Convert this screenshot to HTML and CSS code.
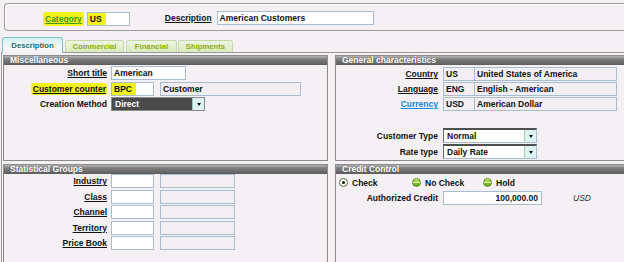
FILE: index.html
```html
<!DOCTYPE html>
<html>
<head>
<meta charset="utf-8">
<title>Customer</title>
<link rel="stylesheet" href="styles.css">
</head>
<body>
<div class="screen">
  <div class="header-frame">
    <span class="hl cat-label">Category</span>
    <span class="field cat-field"><span class="hl-in">US</span></span>
    <span class="lbl u desc-label">Description</span>
    <span class="field desc-field">American Customers</span>
  </div>

  <div class="tabs">
    <div class="tab active">Description</div>
    <div class="tab t-commercial">Commercial</div>
    <div class="tab t-financial">Financial</div>
    <div class="tab t-shipments">Shipments</div>
  </div>

  <div class="tabpanel">
    <section class="box">
      <div class="box-title">Miscellaneous</div>
      <div class="form misc-form">
        <span class="lbl"><span class="u">Short title</span></span>
        <div class="ctl"><span class="field w75">American</span></div>

        <span class="lbl"><span class="hl hl-cc u">Customer counter</span></span>
        <div class="ctl"><span class="field w43"><span class="hl-in">BPC</span></span><span class="field ro w141 sp6">Customer</span></div>

        <span class="lbl">Creation Method</span>
        <div class="ctl"><span class="select dark w94"><span class="sel-text">Direct</span><span class="arrow"></span></span></div>
      </div>
    </section>

    <section class="box box-right">
      <div class="box-title">General characteristics</div>
      <div class="form gen-form">
        <span class="lbl"><span class="u">Country</span></span>
        <div class="ctl"><span class="field ro w31">US</span><span class="field ro w142 join">United States of America</span></div>

        <span class="lbl"><span class="u">Language</span></span>
        <div class="ctl"><span class="field ro w31">ENG</span><span class="field ro w142 join">English - American</span></div>

        <span class="lbl"><span class="u link">Currency</span></span>
        <div class="ctl"><span class="field ro w31">USD</span><span class="field ro w142 join">American Dollar</span></div>

        <div class="spacer"></div>

        <span class="lbl">Customer Type</span>
        <div class="ctl"><span class="select w94"><span class="sel-text">Normal</span><span class="arrow"></span></span></div>

        <span class="lbl">Rate type</span>
        <div class="ctl"><span class="select w94"><span class="sel-text">Daily Rate</span><span class="arrow"></span></span></div>
      </div>
    </section>

    <section class="box box-bottom">
      <div class="box-title">Statistical Groups</div>
      <div class="form stat-form">
        <span class="lbl"><span class="u">Industry</span></span>
        <div class="ctl"><span class="field w43"></span><span class="field ro w75 sp6"></span></div>
        <span class="lbl"><span class="u">Class</span></span>
        <div class="ctl"><span class="field w43"></span><span class="field ro w75 sp6"></span></div>
        <span class="lbl"><span class="u">Channel</span></span>
        <div class="ctl"><span class="field w43"></span><span class="field ro w75 sp6"></span></div>
        <span class="lbl"><span class="u">Territory</span></span>
        <div class="ctl"><span class="field w43"></span><span class="field ro w75 sp6"></span></div>
        <span class="lbl"><span class="u">Price Book</span></span>
        <div class="ctl"><span class="field w43"></span><span class="field ro w75 sp6"></span></div>
      </div>
    </section>

    <section class="box box-right box-bottom">
      <div class="box-title">Credit Control</div>
      <div class="radios">
        <label class="radio r-check"><span class="dot checked"></span>Check</label>
        <label class="radio r-nocheck"><span class="dot green"></span>No Check</label>
        <label class="radio r-hold"><span class="dot green"></span>Hold</label>
      </div>
      <div class="form credit-form">
        <span class="lbl">Authorized Credit</span>
        <div class="ctl"><span class="field w99 num">100,000.00</span><span class="cur">USD</span></div>
      </div>
    </section>
  </div>
</div>
</body>
</html>
```

FILE: styles.css
```css
html, body {
  margin: 0;
  padding: 0;
  overflow: hidden;
}

body {
  width: 624px;
  height: 262px;
  background: #f4f0f4;
  font-family: "Liberation Sans", Arial, sans-serif;
  font-size: 8.5px;
  font-weight: bold;
  color: #111;
}

.screen {
  width: 624px;
  height: 262px;
  overflow: hidden;
}

/* ---------- top frame ---------- */
.header-frame {
  margin: 3px 0 0 4px;
  height: 28px;
  box-sizing: border-box;
  border: 1px solid #9c9c9c;
  border-right: none;
  border-radius: 4px 0 0 4px;
  box-shadow: inset 1px 1px 0 #ffffff;
  display: flex;
  align-items: flex-start;
  padding: 7px 0 0 38px;
}

.hl {
  background: #f2f21c;
  border-radius: 3px;
}

.cat-label {
  color: #3c9a14;
  text-decoration: underline;
  padding: 0 2px;
  height: 14px;
  line-height: 14px;
  margin-top: 1px;
}

.hl-in {
  display: inline-block;
  background: #f2f21c;
  padding-right: 4px;
  margin-left: -2px;
  padding-left: 2px;
  height: 12px;
}

.cat-field {
  width: 43px;
  margin-left: 3px;
  margin-top: 1px;
}

.desc-label {
  margin-left: 35px;
  line-height: 15px;
}

.desc-field {
  width: 157px;
  height: 15px;
  line-height: 13px;
  margin-left: 5px;
}

/* ---------- tabs ---------- */
.tabs {
  display: flex;
  align-items: flex-end;
  margin-top: 6px;
  margin-bottom: -1px;
  padding-left: 2px;
  gap: 2px;
  height: 16px;
  position: relative;
  z-index: 1;
}

.tab {
  box-sizing: border-box;
  text-align: center;
  font-size: 7.7px;
  border-radius: 3px 3px 0 0;
}

.tab.active {
  width: 61px;
  height: 16px;
  line-height: 15px;
  border: 1px solid #7cc2c2;
  border-bottom: none;
  background: linear-gradient(#d4eeee, #f4fafa 60%, #f4f0f4);
  color: #1f6e6e;
}

.t-commercial, .t-financial, .t-shipments {
  height: 12px;
  line-height: 11px;
  margin-bottom: 1px;
  border: 1px solid #c6d8aa;
  border-bottom: none;
  background: linear-gradient(#eef6e2, #d8ebbc);
  color: #94ab1a;
}

.t-commercial { width: 59px; }
.t-financial { width: 51px; }
.t-shipments { width: 55px; margin-left: -1px; }

/* ---------- tab panel ---------- */
.tabpanel {
  margin-left: 1px;
  border-top: 1px solid #9a9a9a;
  border-left: 1px solid #9a9a9a;
  padding: 2px 0 0 1px;
  display: grid;
  grid-template-columns: 325px 289px;
  grid-template-rows: 106px 98px;
  column-gap: 7px;
  row-gap: 3px;
}

.box {
  box-sizing: border-box;
  border: 1px solid #8c8c8c;
  background: #f4f0f4;
}

.box-right {
  border-right: none;
}

.box-bottom {
  border-bottom: none;
}

.box-title {
  height: 9px;
  line-height: 9px;
  padding-left: 6px;
  color: #ffffff;
  font-size: 8.5px;
  background: linear-gradient(#b4b4b4, #7e7e7e 35%, #5c5c5c);
  text-shadow: 0 0 1px #555;
  white-space: nowrap;
}

/* ---------- forms ---------- */
.form {
  display: grid;
  align-items: center;
}

.lbl {
  text-align: right;
  line-height: 14px;
  white-space: nowrap;
}

.u {
  text-decoration: underline;
}

.link {
  color: #1a86de;
}

.hl-cc {
  padding: 1px 1px 1px 2px;
}

.ctl {
  display: flex;
  align-items: center;
}

.field {
  display: inline-block;
  box-sizing: border-box;
  height: 14px;
  line-height: 12px;
  border: 1px solid #a6bdd4;
  background: #ffffff;
  padding-left: 2px;
  white-space: nowrap;
  overflow: hidden;
}

.field.ro {
  background: #f2eef2;
}

.join { margin-left: -1px; }
.sp6 { margin-left: 6px; }

.w31 { width: 32px; }
.w43 { width: 43px; }
.w75 { width: 75px; }
.w94 { width: 94px; }
.w99 { width: 99px; }
.w141 { width: 141px; }
.w142 { width: 143px; }

.misc-form {
  grid-template-columns: 103px auto;
  column-gap: 4px;
  grid-auto-rows: 14px;
  row-gap: 1.5px;
  padding-top: 1px;
}

.gen-form {
  grid-template-columns: 102px auto;
  column-gap: 5px;
  grid-template-rows: 14px 14px 14px 15px 15px 15px;
  row-gap: 1px;
  padding-top: 2px;
}

.spacer {
  grid-column: 1 / 3;
}

.stat-form {
  grid-template-columns: 103px auto;
  column-gap: 4px;
  grid-auto-rows: 14px;
  row-gap: 1.5px;
}

/* ---------- selects ---------- */
.select {
  display: flex;
  box-sizing: border-box;
  height: 15px;
  border: 1px solid #a6bdd4;
  border-top: 2px solid #505050;
  border-left: 1px solid #6a6a6a;
  background: #ffffff;
}

.sel-text {
  flex: 1;
  padding-left: 3px;
  line-height: 12px;
}

.select.dark {
  height: 14px;
  border: 1px solid #8a8a8a;
  background: #4a4a4a;
  color: #ffffff;
}

.arrow {
  width: 11px;
  background: #dcf3ef;
  border-left: 1px solid #9fc9c2;
  display: flex;
  align-items: center;
  justify-content: center;
}

.arrow::after {
  content: "";
  width: 0;
  height: 0;
  border-left: 2.5px solid transparent;
  border-right: 2.5px solid transparent;
  border-top: 3px solid #111;
}

/* ---------- credit control ---------- */
.radios {
  display: flex;
  align-items: center;
  height: 13px;
  padding: 2px 0 0 3px;
}

.radio {
  display: flex;
  align-items: center;
  gap: 4px;
  line-height: 12px;
}

.r-check { width: 73px; }
.r-nocheck { width: 71px; }

.dot {
  box-sizing: border-box;
  width: 9px;
  height: 9px;
  border-radius: 50%;
  display: inline-flex;
  align-items: center;
  justify-content: center;
}

.dot.checked {
  border: 1px solid #4f6b38;
  background: #ffffff;
}

.dot.checked::after {
  content: "";
  width: 3px;
  height: 3px;
  border-radius: 50%;
  background: #111;
}

.dot.green {
  border: 1px solid #5b8a26;
  background: linear-gradient(#c4ec74, #8ccc34 45%, #e4f7b8 50%, #7cbc28 60%, #6aa81e);
}

.credit-form {
  grid-template-columns: 102px auto;
  column-gap: 5px;
  margin-top: 2px;
}

.num {
  text-align: right;
  padding-right: 3px;
}

.cur {
  margin-left: 31px;
  font-weight: normal;
  font-style: italic;
  color: #333;
}
```
